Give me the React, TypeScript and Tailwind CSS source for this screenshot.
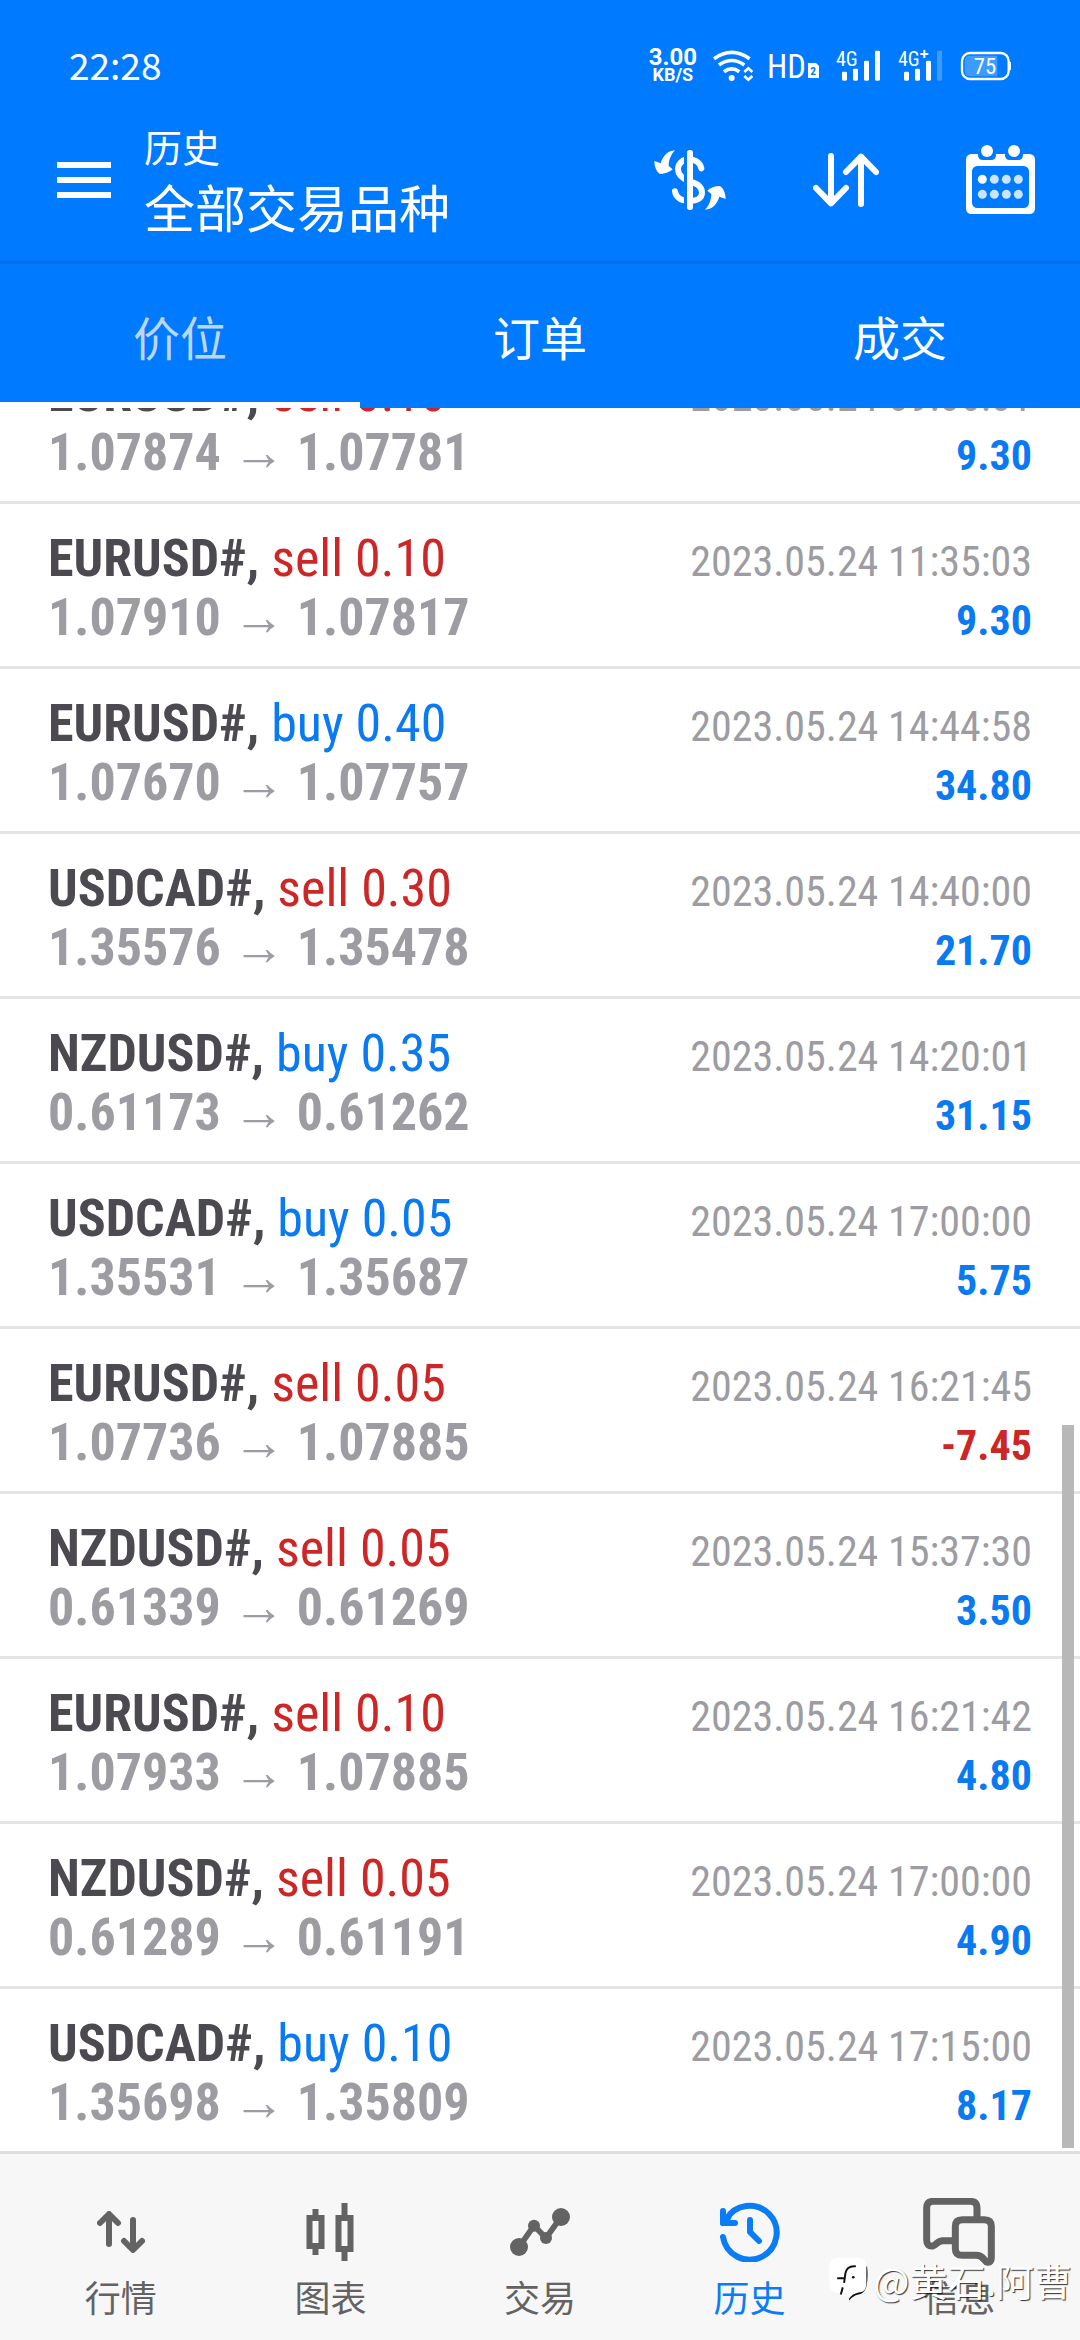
import type { ReactNode } from 'react';

type Deal = {
  symbol: string;
  side: 'sell' | 'buy';
  volume: string;
  open: string;
  close: string;
  time: string;
  profit: string;
};

const deals: Deal[] = [
  { symbol: 'EURUSD#', side: 'sell', volume: '0.10', open: '1.07874', close: '1.07781', time: '2023.05.24 09:06:01', profit: '9.30' },
  { symbol: 'EURUSD#', side: 'sell', volume: '0.10', open: '1.07910', close: '1.07817', time: '2023.05.24 11:35:03', profit: '9.30' },
  { symbol: 'EURUSD#', side: 'buy', volume: '0.40', open: '1.07670', close: '1.07757', time: '2023.05.24 14:44:58', profit: '34.80' },
  { symbol: 'USDCAD#', side: 'sell', volume: '0.30', open: '1.35576', close: '1.35478', time: '2023.05.24 14:40:00', profit: '21.70' },
  { symbol: 'NZDUSD#', side: 'buy', volume: '0.35', open: '0.61173', close: '0.61262', time: '2023.05.24 14:20:01', profit: '31.15' },
  { symbol: 'USDCAD#', side: 'buy', volume: '0.05', open: '1.35531', close: '1.35687', time: '2023.05.24 17:00:00', profit: '5.75' },
  { symbol: 'EURUSD#', side: 'sell', volume: '0.05', open: '1.07736', close: '1.07885', time: '2023.05.24 16:21:45', profit: '-7.45' },
  { symbol: 'NZDUSD#', side: 'sell', volume: '0.05', open: '0.61339', close: '0.61269', time: '2023.05.24 15:37:30', profit: '3.50' },
  { symbol: 'EURUSD#', side: 'sell', volume: '0.10', open: '1.07933', close: '1.07885', time: '2023.05.24 16:21:42', profit: '4.80' },
  { symbol: 'NZDUSD#', side: 'sell', volume: '0.05', open: '0.61289', close: '0.61191', time: '2023.05.24 17:00:00', profit: '4.90' },
  { symbol: 'USDCAD#', side: 'buy', volume: '0.10', open: '1.35698', close: '1.35809', time: '2023.05.24 17:15:00', profit: '8.17' },
];

function WifiIcon() {
  return (
    <svg viewBox="340 60 120 96" className="h-8 w-10" fill="none" stroke="currentColor" strokeWidth="11" aria-hidden="true">
      <path d="M343 86 Q396 48 450 86" />
      <path d="M358 105 Q396 78 434 105" />
      <path d="M373 125 Q396 108 419 125" />
      <circle cx="396" cy="144" r="9" fill="currentColor" stroke="none" />
      <path d="M434 126 L446 115 L458 126" strokeWidth="8" />
      <path d="M434 138 L446 149 L458 138" strokeWidth="8" />
    </svg>
  );
}

function HdIcon() {
  return (
    <svg viewBox="504 66 153 84" className="h-7 w-[51px] overflow-visible" aria-hidden="true">
      <text x="498" y="144" fontSize="98" fill="currentColor">HD</text>
      <path d="M621 99 H645 L654 108 V144 H621 Z" fill="currentColor" />
      <text x="628" y="136" fontSize="34" fontWeight="700" fill="#007aff">2</text>
    </svg>
  );
}

function SignalIcon({ label, plus, strength }: { label: string; plus?: boolean; strength: number }) {
  const bars = [
    { x: 24, y: 65 },
    { x: 57, y: 56 },
    { x: 90, y: 32 },
    { x: 123, y: 2 },
  ];
  return (
    <svg viewBox="6 0 138 96" className="h-8 w-[46px] overflow-visible" aria-hidden="true">
      <text x="6" y="47" fontSize="60" fill="currentColor">{label}</text>
      {plus && <path d="M85 0 V24 M73 12 H97" stroke="currentColor" strokeWidth="6" />}
      {bars.map((bar, i) => (
        <rect key={bar.x} x={bar.x} y={bar.y} width="15" height={92 - bar.y} rx="4" fill="currentColor" opacity={i < strength ? 1 : 0.25} />
      ))}
    </svg>
  );
}

function BatteryIcon() {
  return (
    <svg viewBox="1080 63 156 90" className="h-[30px] w-[52px] overflow-visible" aria-hidden="true">
      <rect x="1086" y="69" width="140" height="78" rx="24" fill="none" stroke="currentColor" strokeWidth="7" />
      <path d="M1110 77 H1192 V139 H1110 Q1094 139 1094 123 V93 Q1094 77 1110 77Z" fill="#3d9aff" />
      <rect x="1226" y="95" width="7" height="26" rx="3" fill="currentColor" />
      <text x="1155" y="131" fontSize="68" textAnchor="middle" fill="currentColor">75</text>
    </svg>
  );
}

function CurrencyIcon() {
  const arrow = 'M165 91 C145 93 130 104 122 130 L103 123 C103 140 110 156 120 162 C136 162 150 156 158 148 L146 138 C146 122 152 104 165 91Z';
  return (
    <svg viewBox="102 90 216 180" className="h-[60px] w-[72px]" aria-hidden="true">
      <path d={arrow} fill="currentColor" />
      <path d={arrow} fill="currentColor" transform="rotate(180 210 180)" />
      <path
        d="M244 145 C240 126 224 118 206 118 C186 118 174 132 174 148 C174 166 188 176 208 184 C234 190 246 200 246 218 C246 235 230 243 208 243 C186 243 168 234 165 214"
        fill="none"
        stroke="currentColor"
        strokeWidth="18"
        strokeLinecap="round"
      />
      <rect x="192" y="90" width="9" height="180" fill="#007aff" />
      <rect x="201" y="90" width="18" height="180" rx="8" fill="currentColor" />
    </svg>
  );
}

function SortIcon() {
  return (
    <svg viewBox="579 99 198 162" className="h-[54px] w-[66px]" fill="none" stroke="currentColor" strokeWidth="18" strokeLinecap="round" strokeLinejoin="round" aria-hidden="true">
      <path d="M633 108 V250 M588 204 L633 250 L678 204" />
      <path d="M723 252 V110 M678 156 L723 110 L768 156" />
    </svg>
  );
}

function CalendarIcon() {
  const columns = [1087, 1123, 1159, 1195];
  return (
    <svg viewBox="1038 72 207 213" className="h-[71px] w-[69px]" aria-hidden="true">
      <rect x="1038" y="99" width="207" height="180" rx="16" fill="currentColor" />
      <rect x="1056" y="135" width="171" height="126" rx="16" fill="#007aff" />
      <path d="M1074 90 V102 Q1074 117 1089 117 H1113 Q1128 117 1128 102 V90Z M1155 90 V102 Q1155 117 1170 117 H1194 Q1209 117 1209 102 V90Z" fill="#007aff" />
      <circle cx="1101" cy="90" r="18" fill="currentColor" />
      <circle cx="1182" cy="90" r="18" fill="currentColor" />
      {columns.map((x, i) => (
        <g key={x}>
          <circle cx={x} cy="175" r="13.5" fill={i === 0 ? '#ffffff' : '#cce4ff'} />
          <circle cx={x} cy="220" r="13.5" fill="#cce4ff" />
        </g>
      ))}
    </svg>
  );
}

function QuotesIcon() {
  return (
    <svg viewBox="0 0 48 42" className="h-[42px] w-12" fill="none" stroke="currentColor" strokeWidth="6" strokeLinecap="round" strokeLinejoin="round" aria-hidden="true">
      <path d="M12 33 V4 M3 12 L12 3 L21 12" />
      <path d="M36 9 V38 M27 30 L36 39 L45 30" />
    </svg>
  );
}

function ChartIcon() {
  return (
    <svg viewBox="0 0 48 58" className="h-[58px] w-12" aria-hidden="true">
      <g fill="none" stroke="currentColor" strokeWidth="6">
        <rect x="3.5" y="15" width="12" height="28" />
        <rect x="32.5" y="15" width="12" height="31" />
        <path d="M9.5 6 V12 M9.5 46 V52 M38.5 0 V12 M38.5 49 V58" />
      </g>
    </svg>
  );
}

function TradeIcon() {
  return (
    <svg viewBox="60 54 180 144" className="h-12 w-[60px]" fill="currentColor" aria-hidden="true">
      <path d="M87 171 L132 107 L168 144 L213 81" fill="none" stroke="currentColor" strokeWidth="17" />
      <circle cx="87" cy="171" r="27" />
      <circle cx="132" cy="107" r="18" />
      <circle cx="168" cy="144" r="18" />
      <circle cx="213" cy="81" r="27" />
    </svg>
  );
}

function HistoryIcon() {
  return (
    <svg viewBox="687 36 180 180" className="h-[60px] w-[60px]" fill="none" stroke="currentColor" strokeWidth="18" strokeLinecap="round" strokeLinejoin="round" aria-hidden="true">
      <path d="M696 141 A81 81 0 1 0 705 89" />
      <path d="M696 63 V99 H732" />
      <path d="M696 99 L712 82" />
      <path d="M777 90 V126 L804 153" />
    </svg>
  );
}

function MessagesIcon() {
  return (
    <svg viewBox="306 54 216 204" className="h-[68px] w-[72px]" fill="none" stroke="currentColor" strokeWidth="21" aria-hidden="true">
      <path d="M468 112 V84 Q468 64 448 64 H337 Q317 64 317 84 V180 Q317 200 335 198 C346 196 348 182 366 182 H398" />
      <path d="M424 119 H490 Q511 119 511 139 V232 Q511 248 500 247 C488 245 490 226 466 226 H424 Q403 226 403 206 V139 Q403 119 424 119Z" />
    </svg>
  );
}

function WatermarkLogo() {
  const shape = 'M56 240 H116 Q142 240 142 268 V318 Q142 345 118 346 Q98 350 88 366 L84 348 H58 Q30 346 30 318 V268 Q30 240 56 240Z';
  return (
    <svg viewBox="28 238 122 136" className="h-[45px] w-10" aria-hidden="true">
      <path d="M142 262 Q146 300 140 326 Q134 346 116 350 Q98 354 88 368 L84 350 Z" fill="#111111" transform="translate(2 2)" />
      <path d={shape} fill="#ffffff" />
      <path d="M110 266 Q80 262 77 294 L74 316 M70 330 L64 352 M53 302 H78" fill="none" stroke="#111111" strokeWidth="6" />
      <circle cx="102" cy="299" r="4" fill="#111111" />
    </svg>
  );
}

function DealRow({ deal, last }: { deal: Deal; last: boolean }) {
  const sideColor = deal.side === 'sell' ? 'text-[#cc2626]' : 'text-[#0a7af2]';
  const profitColor = deal.profit.startsWith('-') ? 'text-[#cc2626]' : 'text-[#0a7af2]';
  return (
    <li className={`shrink-0 px-12 pt-[25px] pb-[19px] ${last ? '' : 'border-b-[3px] border-[#e4e4e4]'}`}>
      <div className="flex h-[59px] items-baseline justify-between">
        <p className="text-[52px] leading-[59px] text-[#4c4a50]">
          <b>{deal.symbol},</b> <span className={sideColor}>{deal.side} {deal.volume}</span>
        </p>
        <time className="text-[42px] leading-[48px] text-[#9c9ca2]">{deal.time}</time>
      </div>
      <div className="flex h-[59px] items-baseline justify-between font-bold">
        <p className="text-[52px] leading-[59px] text-[#9c9ca2]">
          {deal.open} <span className="font-['Liberation_Sans',sans-serif]">→</span> {deal.close}
        </p>
        <p className={`text-[42px] leading-[48px] ${profitColor}`}>{deal.profit}</p>
      </div>
    </li>
  );
}

function NavItem({ label, icon, active }: { label: string; icon: ReactNode; active?: boolean }) {
  return (
    <a href="#" className={`flex flex-1 flex-col items-center gap-2 ${active ? 'text-[#0a7cf5]' : 'text-[#636363]'}`}>
      <span className="flex h-[72px] items-center">{icon}</span>
      <span className="text-[36px] leading-[48px]">{label}</span>
    </a>
  );
}

export default function App() {
  return (
    <div className="relative flex h-screen flex-col overflow-hidden bg-white font-['Roboto_Condensed','Noto_Sans_CJK_SC',sans-serif]">
      <header className="shrink-0 bg-[#007aff] text-white">
        <div className="flex h-[99px] items-center justify-between pt-[33px] pr-[68px] pl-[69px]">
          <time className="pb-1 font-['Noto_Sans_CJK_SC',sans-serif] text-[37px] leading-[40px]">22:28</time>
          <div className="flex items-center gap-4">
            <p className="text-center font-['Roboto',sans-serif] text-[24px] leading-[18px] font-bold">
              3.00
              <span className="block text-[18px]">KB/S</span>
            </p>
            <WifiIcon />
            <HdIcon />
            <SignalIcon label="4G" strength={4} />
            <SignalIcon label="4G" plus strength={3} />
            <BatteryIcon />
          </div>
        </div>
        <div className="flex h-[162px] items-center justify-between pr-[45px] pl-[57px]">
          <div className="flex items-center gap-[33px]">
            <button type="button" aria-label="菜单" className="flex w-[54px] flex-col gap-[9px]">
              <span className="h-1.5 bg-white" />
              <span className="h-1.5 bg-white" />
              <span className="h-1.5 bg-white" />
            </button>
            <div className="leading-[62px]">
              <p className="text-[38px]">历史</p>
              <h1 className="text-[51px]">全部交易品种</h1>
            </div>
          </div>
          <div className="flex items-center gap-[87px]">
            <button type="button" aria-label="货币"><CurrencyIcon /></button>
            <button type="button" aria-label="排序"><SortIcon /></button>
            <button type="button" aria-label="日历"><CalendarIcon /></button>
          </div>
        </div>
        <div role="tablist" className="grid grid-cols-3 border-t-[3px] border-[#006feb] font-['Noto_Sans_CJK_SC',sans-serif] text-[47px]">
          <button type="button" role="tab" aria-selected="true" className="h-36 text-[#bcd6f0] shadow-[inset_0_-6px_0_#ffffff]">价位</button>
          <button type="button" role="tab" aria-selected="false" className="h-36">订单</button>
          <button type="button" role="tab" aria-selected="false" className="h-36">成交</button>
        </div>
      </header>

      <main className="relative flex min-h-0 flex-1 flex-col overflow-hidden">
        <ul className="flex min-h-0 flex-1 flex-col justify-end">
          {deals.map((deal, i) => (
            <DealRow key={deal.open} deal={deal} last={i === deals.length - 1} />
          ))}
        </ul>
        <div className="absolute right-1.5 bottom-[3px] h-[723px] w-3 bg-[#b8b8b8]" />
      </main>

      <nav className="flex shrink-0 border-t-[3px] border-[#dedede] bg-[#f7f7f7] px-4 pt-[42px] pb-4">
        <NavItem label="行情" icon={<QuotesIcon />} />
        <NavItem label="图表" icon={<ChartIcon />} />
        <NavItem label="交易" icon={<TradeIcon />} />
        <NavItem label="历史" icon={<HistoryIcon />} active />
        <NavItem label="信息" icon={<MessagesIcon />} />
      </nav>

      <div className="absolute right-2 bottom-[38px] flex items-center gap-1 text-white">
        <WatermarkLogo />
        <span className="font-['Noto_Sans_CJK_SC',sans-serif] text-[38px] leading-[45px] [text-shadow:1px_1px_1px_#000000cc]">@黄石.阿曹</span>
      </div>
    </div>
  );
}
